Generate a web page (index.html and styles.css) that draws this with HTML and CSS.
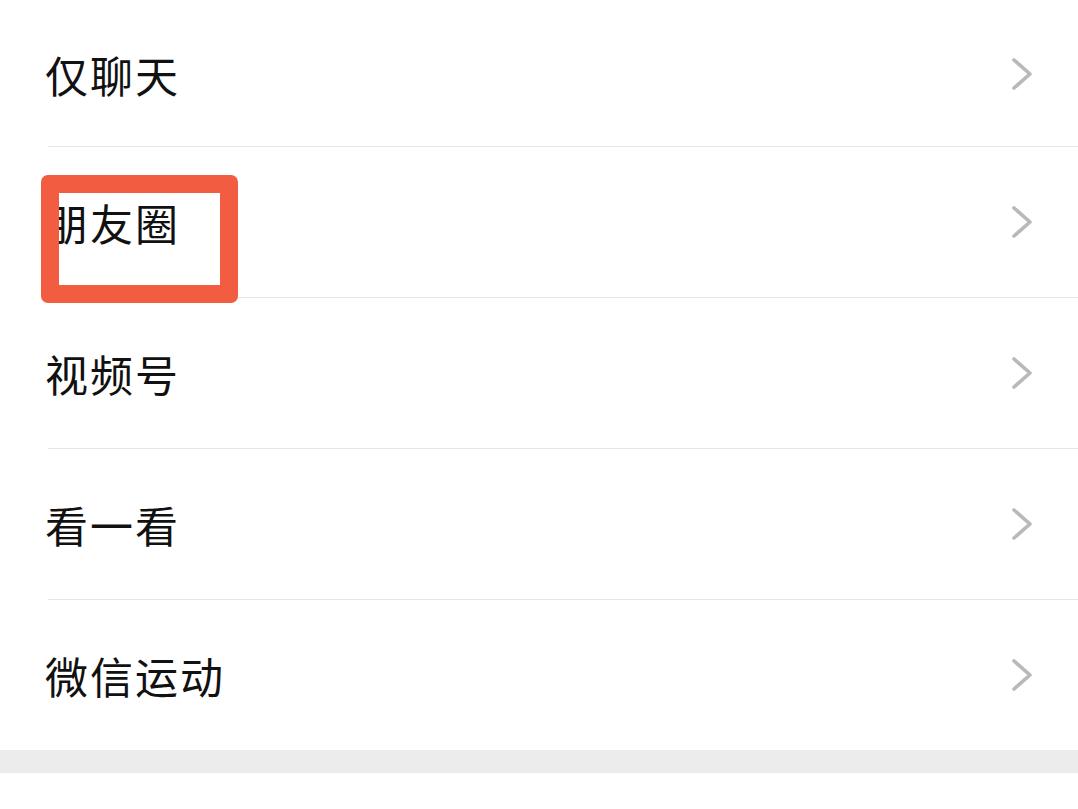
FILE: index.html
```html
<!DOCTYPE html>
<html lang="zh-CN">
<head>
<meta charset="utf-8">
<link rel="stylesheet" href="styles.css">
</head>
<body>
<div class="list">
  <div class="row first"><span class="label">仅聊天</span><svg class="chev" viewBox="0 0 22 34" width="22" height="34"><polyline points="3,3 19,17 3,31"/></svg></div>
  <div class="row"><span class="label">朋友圈</span><svg class="chev" viewBox="0 0 22 34" width="22" height="34"><polyline points="3,3 19,17 3,31"/></svg><div class="mark"></div></div>
  <div class="row"><span class="label">视频号</span><svg class="chev" viewBox="0 0 22 34" width="22" height="34"><polyline points="3,3 19,17 3,31"/></svg></div>
  <div class="row"><span class="label">看一看</span><svg class="chev" viewBox="0 0 22 34" width="22" height="34"><polyline points="3,3 19,17 3,31"/></svg></div>
  <div class="row last"><span class="label">微信运动</span><svg class="chev" viewBox="0 0 22 34" width="22" height="34"><polyline points="3,3 19,17 3,31"/></svg></div>
</div>
<div class="band"></div>
<div class="tail"></div>
</body>
</html>
```
FILE: styles.css
```css
html, body {
  margin: 0;
  padding: 0;
  background: #ffffff;
}
body {
  width: 1078px;
  height: 809px;
  overflow: hidden;
  font-family: "Noto Sans CJK SC", "Noto Sans", sans-serif;
}
.list {
  display: flex;
  flex-direction: column;
}
.row {
  position: relative;
  height: 151px;
  box-sizing: border-box;
  display: flex;
  align-items: center;
  justify-content: space-between;
  padding: 0 45px 1px 45px;
  background-image: linear-gradient(#e6e6e6, #e6e6e6);
  background-size: calc(100% - 48px) 1px;
  background-position: 48px 100%;
  background-repeat: no-repeat;
}
.row.first {
  height: 147px;
  padding-top: 2px;
}
.row.last {
  background-image: none;
  height: 150px;
  padding-bottom: 0;
}
.label {
  font-size: 43px;
  letter-spacing: 2px;
  color: #111111;
  line-height: 1;
  font-weight: 400;
}
.chev {
  fill: none;
  stroke: #b9b9b9;
  stroke-width: 3.6;
  stroke-linecap: round;
  stroke-linejoin: round;
}
.mark {
  position: absolute;
  left: 41px;
  top: 28px;
  width: 161px;
  height: 92px;
  border: 18px solid #f25c40;
  border-radius: 7px;
}
.band {
  height: 23px;
  background: #ececec;
}
.tail {
  height: 40px;
  background: #ffffff;
}
```
